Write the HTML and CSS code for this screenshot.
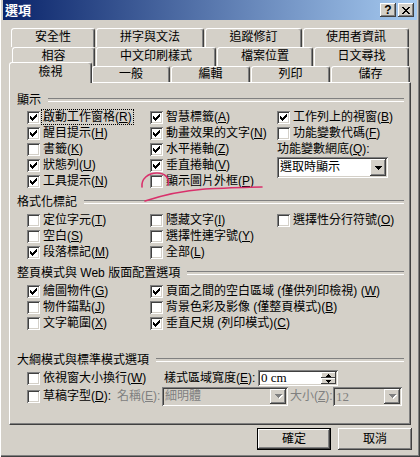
FILE: index.html
```html
<!DOCTYPE html>
<html lang="zh-Hant">
<head>
<meta charset="utf-8">
<title>選項</title>
<link rel="stylesheet" href="styles.css">
</head>
<body>
<svg class="defs" width="0" height="0" aria-hidden="true">
  <defs>
    <symbol id="chk" viewBox="0 0 13 13"><path d="M3 5H4V6H5V7H6V6H7V5H8V4H9V3H10V6H9V7H8V8H7V9H6V10H5V9H4V8H3Z"/></symbol>
    <symbol id="arr" viewBox="0 0 7 4"><path d="M0 0H7V1H6V2H5V3H4V4H3V3H2V2H1V1H0Z"/></symbol>
  </defs>
</svg>
<div class="window">
  <div class="titlebar">
    <span class="title">選項</span>
    <div class="tbtns">
      <span class="tbtn">?</span>
      <span class="tbtn"><svg width="8" height="7" viewBox="0 0 8 7" class="xglyph"><path d="M0 0h2v1h-2z M6 0h2v1h-2z M1 1h2v1h-2z M5 1h2v1h-2z M2 2h4v1h-4z M3 3h2v1h-2z M2 4h4v1h-4z M1 5h2v1h-2z M5 5h2v1h-2z M0 6h2v1h-2z M6 6h2v1h-2z"/></svg></span>
    </div>
  </div>
  <div class="body">
    <div class="tabs">
      <div class="tabrow r1">
        <span class="tab w84">安全性</span>
        <span class="tab w108">拼字與文法</span>
        <span class="tab w97">追蹤修訂</span>
        <span class="tab w106">使用者資訊</span>
      </div>
      <div class="tabrow r2">
        <span class="tab w83">相容</span>
        <span class="tab w120">中文印刷樣式</span>
        <span class="tab w96">檔案位置</span>
        <span class="tab w95">日文尋找</span>
      </div>
      <div class="tabrow r3">
        <span class="tab sel w83">檢視</span>
        <span class="tab w78">一般</span>
        <span class="tab w79">編輯</span>
        <span class="tab w79">列印</span>
        <span class="tab w79">儲存</span>
      </div>
    </div>

    <div class="panel">
      <div class="group g1">
        <div class="ghead"><span>顯示</span></div>
        <div class="grid">
          <div class="cbr"><span class="cb"><svg class="ck"><use href="#chk"/></svg></span><span class="lbl focus">啟動工作窗格(<u>R</u>)</span></div>
          <div class="cbr"><span class="cb"><svg class="ck"><use href="#chk"/></svg></span><span class="lbl">智慧標籤(<u>A</u>)</span></div>
          <div class="cbr"><span class="cb"><svg class="ck"><use href="#chk"/></svg></span><span class="lbl">工作列上的視窗(<u>B</u>)</span></div>

          <div class="cbr"><span class="cb"><svg class="ck"><use href="#chk"/></svg></span><span class="lbl">醒目提示(<u>H</u>)</span></div>
          <div class="cbr"><span class="cb"><svg class="ck"><use href="#chk"/></svg></span><span class="lbl">動畫效果的文字(<u>N</u>)</span></div>
          <div class="cbr"><span class="cb"></span><span class="lbl">功能變數代碼(<u>F</u>)</span></div>

          <div class="cbr"><span class="cb"></span><span class="lbl">書籤(<u>K</u>)</span></div>
          <div class="cbr"><span class="cb"><svg class="ck"><use href="#chk"/></svg></span><span class="lbl">水平捲軸(<u>Z</u>)</span></div>
          <div class="plain">功能變數網底(<u>Q</u>):</div>

          <div class="cbr"><span class="cb"><svg class="ck"><use href="#chk"/></svg></span><span class="lbl">狀態列(<u>U</u>)</span></div>
          <div class="cbr"><span class="cb"><svg class="ck"><use href="#chk"/></svg></span><span class="lbl">垂直捲軸(<u>V</u>)</span></div>
          <div class="selcell">
            <div class="combo wide"><span class="ctext">選取時顯示</span><span class="dbtn"><svg width="7" height="4"><use href="#arr"/></svg></span></div>
          </div>

          <div class="cbr"><span class="cb"><svg class="ck"><use href="#chk"/></svg></span><span class="lbl">工具提示(<u>N</u>)</span></div>
          <div class="cbr"><span class="cb"></span><span class="lbl">顯示圖片外框(<u>P</u>)</span></div>
        </div>
      </div>

      <div class="group">
        <div class="ghead"><span>格式化標記</span></div>
        <div class="grid">
          <div class="cbr"><span class="cb"></span><span class="lbl">定位字元(<u>T</u>)</span></div>
          <div class="cbr"><span class="cb"></span><span class="lbl">隱藏文字(<u>I</u>)</span></div>
          <div class="cbr"><span class="cb"></span><span class="lbl">選擇性分行符號(<u>O</u>)</span></div>

          <div class="cbr"><span class="cb"></span><span class="lbl">空白(<u>S</u>)</span></div>
          <div class="cbr"><span class="cb"></span><span class="lbl">選擇性連字號(<u>Y</u>)</span></div>
          <div></div>

          <div class="cbr"><span class="cb"><svg class="ck"><use href="#chk"/></svg></span><span class="lbl">段落標記(<u>M</u>)</span></div>
          <div class="cbr"><span class="cb"></span><span class="lbl">全部(<u>L</u>)</span></div>
          <div></div>
        </div>
      </div>

      <div class="group">
        <div class="ghead"><span>整頁模式與 Web 版面配置選項</span></div>
        <div class="grid two">
          <div class="cbr"><span class="cb"><svg class="ck"><use href="#chk"/></svg></span><span class="lbl">繪圖物件(<u>G</u>)</span></div>
          <div class="cbr"><span class="cb"><svg class="ck"><use href="#chk"/></svg></span><span class="lbl">頁面之間的空白區域 (僅供列印檢視) (<u>W</u>)</span></div>

          <div class="cbr"><span class="cb"></span><span class="lbl">物件錨點(<u>J</u>)</span></div>
          <div class="cbr"><span class="cb"></span><span class="lbl">背景色彩及影像 (僅整頁模式)(<u>B</u>)</span></div>

          <div class="cbr"><span class="cb"></span><span class="lbl">文字範圍(<u>X</u>)</span></div>
          <div class="cbr"><span class="cb"><svg class="ck"><use href="#chk"/></svg></span><span class="lbl">垂直尺規 (列印模式)(<u>C</u>)</span></div>
        </div>
      </div>

      <div class="group g4">
        <div class="ghead"><span>大綱模式與標準模式選項</span></div>
        <div class="frow">
          <div class="cbr w136"><span class="cb"></span><span class="lbl">依視窗大小換行(<u>W</u>)</span></div>
          <span class="plain w95">樣式區域寬度(<u>E</u>):</span>
          <div class="spin">
            <span class="stext">0 cm</span>
            <span class="sbtns">
              <span class="sbtn"><svg width="5" height="3" viewBox="0 0 5 3"><path d="M2 0H3V1H4V2H5V3H0V2H1V1H2Z"/></svg></span>
              <span class="sbtn"><svg width="5" height="3" viewBox="0 0 5 3"><path d="M0 0H5V1H4V2H3V3H2V2H1V1H0Z"/></svg></span>
            </span>
          </div>
        </div>
        <div class="frow">
          <div class="cbr w90"><span class="cb"></span><span class="lbl">草稿字型(<u>D</u>):</span></div>
          <span class="plain dis w45">名稱(<u>E</u>):</span>
          <div class="combo dcombo w126"><span class="ctext">細明體</span><span class="dbtn"><svg width="7" height="4"><use href="#arr"/></svg></span></div>
          <span class="plain dis w45 pl2">大小(<u>Z</u>):</span>
          <div class="combo dcombo w69"><span class="ctext num">12</span><span class="dbtn"><svg width="7" height="4"><use href="#arr"/></svg></span></div>
        </div>
      </div>
    </div>

    <div class="buttons">
      <span class="btn def">確定</span>
      <span class="btn">取消</span>
    </div>
  </div>

  <svg class="annot" width="420" height="457" viewBox="0 0 420 457" aria-hidden="true">
    <path d="M142 187 C141 179 148 173 157 173 C165 173 170 178 168 185" />
    <path d="M145 201 C160 196 180 191 205 189 C228 188 248 187 262 187" />
  </svg>
</div>
</body>
</html>
```

FILE: styles.css
```css
* { box-sizing: border-box; }
html, body { margin: 0; padding: 0; }
body {
  background: #D4D0C8;
  font-family: "Liberation Sans", "Noto Sans CJK TC", sans-serif;
  font-size: 12px;
  line-height: 16px;
  color: #000;
}
.defs { position: absolute; width: 0; height: 0; overflow: hidden; }

.window {
  position: relative;
  width: 420px;
  height: 457px;
  background: #D4D0C8;
  padding: 0 3px 3px 3px;
  display: flex;
  flex-direction: column;
  box-shadow: inset 1px 0 0 #fff, inset -1px -1px 0 #404040, inset -2px -2px 0 #808080;
}

/* title bar */
.titlebar {
  flex: none;
  height: 20px;
  display: flex;
  align-items: center;
  justify-content: space-between;
  padding: 0 3px 0 2px;
  background: linear-gradient(to right, #0A246A, #A6CAF0);
}
.title {
  color: #fff;
  font-weight: bold;
  font-size: 13px;
  line-height: 20px;
  font-family: "Noto Sans CJK TC", sans-serif;
}
.tbtns { display: flex; gap: 2px; }
.tbtn {
  width: 16px;
  height: 14px;
  background: #D4D0C8;
  box-shadow: inset -1px -1px #404040, inset 1px 1px #fff, inset -2px -2px #808080;
  display: flex;
  align-items: center;
  justify-content: center;
  font-weight: bold;
  font-size: 12px;
  line-height: 14px;
  font-family: "Liberation Sans", sans-serif;
}
.xglyph { shape-rendering: crispEdges; fill: #000; }

/* body */
.body {
  flex: 1;
  display: flex;
  flex-direction: column;
  padding: 8px 6px 0 6px;
}

/* tabs */
.tabs { display: flex; flex-direction: column; }
.tabrow { display: flex; }
.r1 { height: 19px; padding-left: 2px; }
.r2 { height: 19px; padding-left: 3px; }
.r3 { height: 16px; align-items: flex-end; z-index: 1; }
.tab {
  flex: none;
  height: 100%;
  margin-right: 1px;
  background: #D4D0C8;
  border: 1px solid;
  border-bottom: none;
  border-color: #fff #404040 transparent #fff;
  border-radius: 3px 3px 0 0;
  box-shadow: inset -1px 0 #808080;
  text-align: center;
  line-height: 17px;
  white-space: nowrap;
}
.r3 .tab { line-height: 14px; }
.r3 .tab.sel {
  height: 21px;
  margin-bottom: -1px;
  margin-right: 0;
  line-height: 18px;
}
.w78 { width: 78px; }
.w79 { width: 79px; }
.w83 { width: 83px; }
.w84 { width: 84px; }
.w95 { width: 95px; }
.w96 { width: 96px; }
.w97 { width: 97px; }
.w106 { width: 106px; }
.w108 { width: 108px; }
.w120 { width: 120px; }

/* panel */
.panel {
  height: 343px;
  border: 1px solid;
  border-color: #fff #404040 #404040 #fff;
  box-shadow: inset -1px -1px #808080;
  padding: 9px 6px 0 0;
}
.group + .group { margin-top: 5px; }
.group.g4 { margin-top: 21px; }
.ghead {
  display: flex;
  align-items: center;
  height: 16px;
  padding-left: 7px;
  margin-bottom: 2px;
  white-space: nowrap;
}
.g1 .ghead { margin-bottom: 1px; }
.g4 .ghead { margin-bottom: 1px; }
.ghead::after {
  content: "";
  flex: 1;
  height: 2px;
  border-top: 1px solid #808080;
  border-bottom: 1px solid #fff;
  margin-left: 7px;
}

.grid {
  display: grid;
  grid-template-columns: 123px 127px 1fr;
  grid-auto-rows: 16px;
  padding-left: 17px;
}
.grid.two { grid-template-columns: 123px 1fr; }

.cbr {
  display: flex;
  align-items: center;
  gap: 2px;
  white-space: nowrap;
}
.cb {
  flex: none;
  width: 13px;
  height: 13px;
  background: #fff;
  box-shadow: inset 1px 1px #808080, inset -1px -1px #fff, inset 2px 2px #404040, inset -2px -2px #D4D0C8;
}
.ck { display: block; width: 13px; height: 13px; fill: #000; shape-rendering: crispEdges; }
.lbl { padding: 0 1px; line-height: 14px; }
.focus { outline: 1px dotted #000; outline-offset: 0; }
.plain { white-space: nowrap; line-height: 16px; }

.selcell { grid-column: 3; grid-row: 4 / span 2; }

/* combo boxes */
.combo {
  display: flex;
  align-items: stretch;
  padding: 2px;
  background: #fff;
  box-shadow: inset 1px 1px #808080, inset -1px -1px #fff, inset 2px 2px #404040, inset -2px -2px #D4D0C8;
}
.combo.wide { width: 111px; height: 21px; }
.ctext { flex: 1; padding-left: 1px; line-height: 17px; white-space: nowrap; overflow: hidden; }
.dbtn {
  flex: none;
  width: 16px;
  background: #D4D0C8;
  box-shadow: inset -1px -1px #404040, inset 1px 1px #fff, inset -2px -2px #808080;
  display: flex;
  align-items: center;
  justify-content: center;
}
.dbtn svg { display: block; fill: #000; shape-rendering: crispEdges; }
.dcombo { background: #D4D0C8; height: 19px; }
.dcombo .ctext { color: #808080; line-height: 15px; }
.dcombo .dbtn svg { fill: #808080; filter: drop-shadow(1px 1px 0 #fff); }
.num { font-family: "Liberation Serif", serif; font-size: 13px; }
.w126 { width: 126px; }
.w69 { width: 69px; }

/* outline group */
.frow {
  display: flex;
  align-items: center;
  height: 18px;
  padding-left: 17px;
}
.w136 { width: 136px; flex: none; }
.w90 { width: 90px; flex: none; }
.w45 { width: 45px; flex: none; }
.frow .w95 { flex: none; padding-left: 1px; }
.pl2 { padding-left: 2px; width: 45px; }
.dis { color: #808080; }

.spin {
  flex: none;
  width: 80px;
  height: 16px;
  display: flex;
  padding: 2px;
  background: #fff;
  box-shadow: inset 1px 1px #808080, inset -1px -1px #fff, inset 2px 2px #404040, inset -2px -2px #D4D0C8;
}
.stext {
  flex: 1;
  font-family: "Liberation Serif", serif;
  font-size: 13px;
  line-height: 12px;
  padding-left: 1px;
}
.sbtns { flex: none; width: 15px; display: flex; flex-direction: column; }
.sbtn {
  flex: 1;
  background: #D4D0C8;
  box-shadow: inset -1px -1px #404040, inset 1px 1px #fff;
  display: flex;
  align-items: center;
  justify-content: center;
}
.sbtn svg { display: block; fill: #000; shape-rendering: crispEdges; }

/* buttons */
.buttons {
  display: flex;
  justify-content: flex-end;
  gap: 7px;
  margin-top: 3px;
  margin-right: -1px;
}
.btn {
  width: 74px;
  height: 22px;
  display: flex;
  align-items: center;
  justify-content: center;
  background: #D4D0C8;
  box-shadow: inset -1px -1px #404040, inset 1px 1px #fff, inset -2px -2px #808080;
  line-height: 16px;
}
.btn.def {
  border: 1px solid #000;
  box-shadow: inset -1px -1px #404040, inset 1px 1px #fff, inset -2px -2px #808080;
}

/* hand-drawn annotation */
.annot {
  position: absolute;
  left: 0;
  top: 0;
  pointer-events: none;
  fill: none;
  stroke: #D9306B;
  stroke-width: 1.6;
  stroke-linecap: round;
}
```
